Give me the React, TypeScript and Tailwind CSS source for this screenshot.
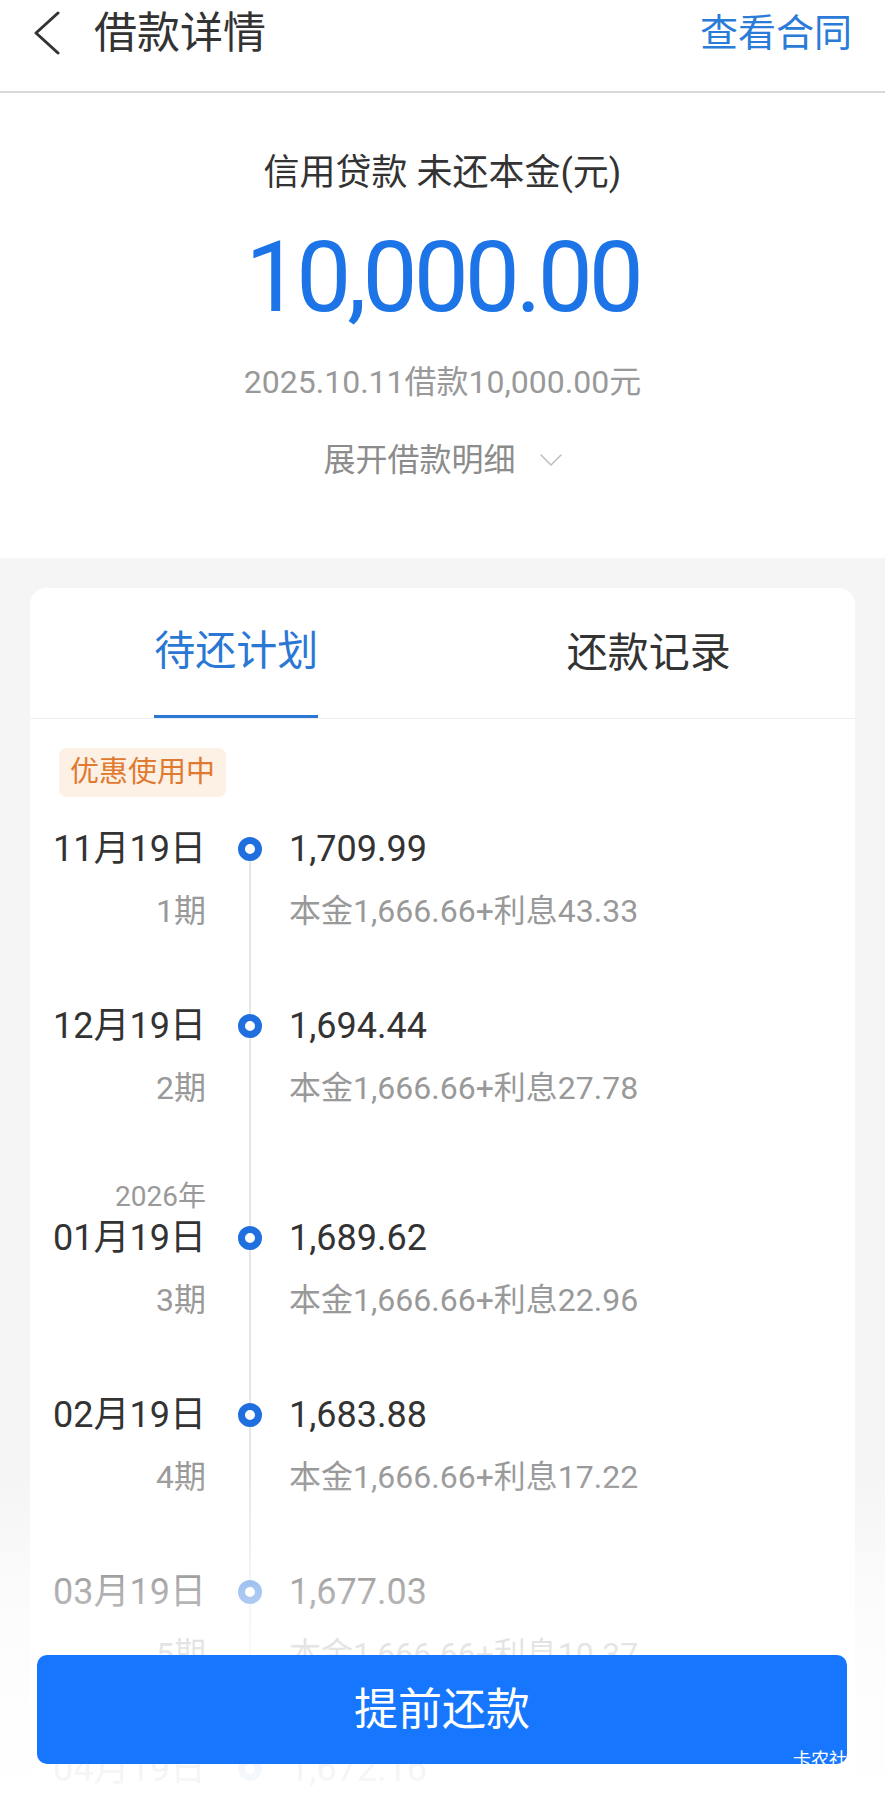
import React from "react";

type Row = {
  date: string;
  amt: string;
  period: string;
  detail: string;
  year?: string;
};

const rows: Row[] = [
  { date: "11月19日", amt: "1,709.99", period: "1期", detail: "本金1,666.66+利息43.33" },
  { date: "12月19日", amt: "1,694.44", period: "2期", detail: "本金1,666.66+利息27.78" },
  { date: "01月19日", amt: "1,689.62", period: "3期", detail: "本金1,666.66+利息22.96", year: "2026年" },
  { date: "02月19日", amt: "1,683.88", period: "4期", detail: "本金1,666.66+利息17.22" },
  { date: "03月19日", amt: "1,677.03", period: "5期", detail: "本金1,666.66+利息10.37" },
  { date: "04月19日", amt: "1,672.16", period: "6期", detail: "本金1,666.70+利息5.46" },
];

function ScheduleRow({ row, first }: { row: Row; first: boolean }) {
  return (
    <div className="flex">
      <div className="w-[176px] flex flex-col items-end pb-[71px]">
        {row.year && (
          <div className="h-[35px] leading-[31px] text-[28px] text-[#999999]">{row.year}</div>
        )}
        <div className="h-[44px] leading-[44px] text-[36px] text-[#333333]">{row.date}</div>
        <div className="mt-[18px] h-[44px] leading-[44px] text-[32px] text-[#999999]">{row.period}</div>
      </div>
      <div className="ml-[32px] w-[24px] flex flex-col items-center">
        {row.year ? (
          <div className="w-[2px] h-[45px] bg-[#e6e6e6]" />
        ) : first ? (
          <div className="w-[2px] h-[10px]" />
        ) : (
          <div className="w-[2px] h-[10px] bg-[#e6e6e6]" />
        )}
        <div className="w-[24px] h-[24px] rounded-full border-[7px] border-[#1f6fde] bg-white" />
        <div className="w-[2px] flex-1 bg-[#e6e6e6]" />
      </div>
      <div className="ml-[27px] flex flex-col">
        {row.year && <div className="h-[35px]" />}
        <div className="h-[44px] leading-[44px] text-[36px] text-[#333333]">{row.amt}</div>
        <div className="mt-[18px] h-[44px] leading-[44px] text-[32px] text-[#999999]">{row.detail}</div>
      </div>
    </div>
  );
}

export default function App() {
  return (
    <div className="relative h-[1795px] w-[885px] overflow-hidden bg-[#f5f5f5] font-['Roboto','Noto_Sans_CJK_SC',sans-serif]">
      {/* Header */}
      <div className="h-[93px] border-b-2 border-[#d9d9d9] bg-white">
        <div className="flex h-[66px] items-center">
          <svg className="ml-[34px]" width="26" height="44" viewBox="0 0 26 44">
            <polyline
              points="24,2 2,22 24,42"
              fill="none"
              stroke="#333333"
              strokeWidth="3"
              strokeLinecap="round"
              strokeLinejoin="round"
            />
          </svg>
          <span className="ml-[34px] text-[43px] leading-none text-[#333333]">借款详情</span>
          <span className="ml-auto mr-[33px] text-[38px] leading-none text-[#2b7bd8]">查看合同</span>
        </div>
      </div>

      {/* Summary */}
      <div className="flex h-[465px] flex-col items-center bg-white">
        <div className="mt-[58px] h-[44px] leading-[44px] text-[36px] text-[#333333]">信用贷款 未还本金(元)</div>
        <div className="mt-[33px] h-[100px] leading-[100px] text-[98px] tracking-[-4px] text-[#1d74e6]">10,000.00</div>
        <div className="mt-[34px] h-[40px] leading-[40px] text-[32px] text-[#999999]">2025.10.11借款10,000.00元</div>
        <div className="mt-[38px] flex h-[40px] items-center text-[32px] text-[#8c8c8c]">
          <span className="leading-[40px]">展开借款明细</span>
          <svg className="ml-[24px]" width="22" height="12" viewBox="0 0 22 12">
            <polyline
              points="1,1 11,11 21,1"
              fill="none"
              stroke="#bdbdbd"
              strokeWidth="1.5"
              strokeLinecap="round"
              strokeLinejoin="round"
            />
          </svg>
        </div>
      </div>

      {/* Card */}
      <div className="px-[30px] pt-[30px]">
        <div className="rounded-[16px] bg-white">
          <div className="flex border-b border-[#eeeeee]">
            <div className="flex h-[130px] flex-1 justify-center">
              <div className="flex h-full flex-col">
                <div className="flex flex-1 items-center text-[41px] leading-none text-[#2a78d4]">待还计划</div>
                <div className="h-[3px] bg-[#2a78d4]" />
              </div>
            </div>
            <div className="flex h-[130px] flex-1 items-center justify-center text-[41px] leading-none text-[#333333]">
              还款记录
            </div>
          </div>

          <div className="ml-[29px] mt-[29px] inline-flex h-[49px] items-center rounded-[8px] bg-[#fdf0e4] px-[11px] text-[29px] leading-none text-[#e07a30]">
            优惠使用中
          </div>

          <div className="mt-[30px] flex flex-col">
            {rows.map((r, i) => (
              <ScheduleRow key={r.date} row={r} first={i === 0} />
            ))}
          </div>
        </div>
      </div>

      {/* Fade overlay */}
      <div className="absolute left-0 right-0 top-[1473px] bottom-0 bg-[linear-gradient(to_bottom,rgba(255,255,255,0)_0px,rgba(255,255,255,0.6)_115px,rgba(255,255,255,0.9)_240px,rgba(255,255,255,0.97)_100%)]" />

      {/* Bottom button */}
      <div className="absolute left-[37px] top-[1655px] flex h-[109px] w-[810px] items-center justify-center rounded-[10px] bg-[#1677fe] text-[44px] leading-none text-white">
        提前还款
      </div>
      <div className="absolute left-[793px] top-[1751px] text-[18px] leading-none text-white">卡农社</div>
    </div>
  );
}
